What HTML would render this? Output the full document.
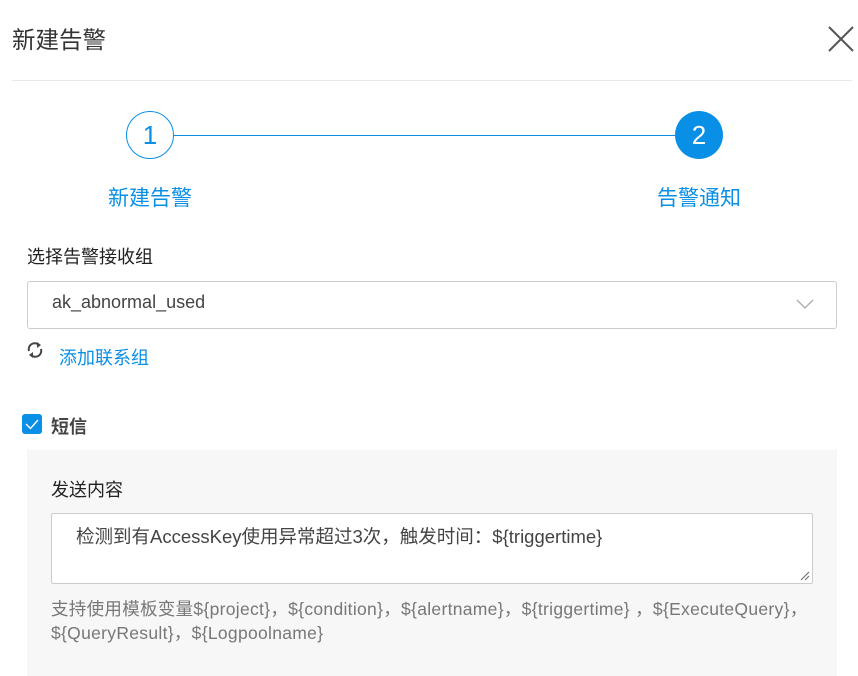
<!DOCTYPE html>
<html><head><meta charset="utf-8"><style>
*{margin:0;padding:0;box-sizing:border-box}
body{width:858px;height:676px;overflow:hidden;background:#fff;font-family:"Liberation Sans","Noto Sans CJK SC",sans-serif;position:relative;color:#333}
.a{position:absolute;white-space:nowrap}
</style></head><body>
<div class="a" style="left:12px;top:21px;font-size:23.5px;color:#333">新建告警</div>
<svg class="a" style="left:826px;top:24px" width="30" height="30"><path d="M3 3L27 27M27 3L3 27" stroke="#555" stroke-width="2"/></svg>
<div class="a" style="left:12px;top:80px;width:840px;height:1px;background:#e8e8e8"></div>
<div class="a" style="left:174px;top:135px;width:502px;height:1px;background:#0a8fe6"></div>
<div class="a" style="left:126px;top:111px;width:48px;height:48px;border:1px solid #0a8fe6;border-radius:50%;color:#0a8fe6;font-size:26px;text-align:center;line-height:46px">1</div>
<div class="a" style="left:675px;top:111px;width:48px;height:48px;background:#0a8fe6;border-radius:50%;color:#fff;font-size:26px;text-align:center;line-height:48px">2</div>
<div class="a" style="left:108px;top:182px;font-size:21px;color:#0a8fe6">新建告警</div>
<div class="a" style="left:657px;top:182px;font-size:21px;color:#0a8fe6">告警通知</div>
<div class="a" style="left:27px;top:243px;font-size:18px;color:#222">选择告警接收组</div>
<div class="a" style="left:27px;top:281px;width:810px;height:48px;border:1px solid #ccc;border-radius:3px"></div>
<div class="a" style="left:52px;top:292px;font-size:18px;color:#444">ak_abnormal_used</div>
<svg class="a" style="left:796px;top:298px" width="18" height="12"><path d="M1 2L9 10L17 2" stroke="#aaa" stroke-width="1.3" fill="none"/></svg>
<svg class="a" style="left:26px;top:341px" width="18" height="18" viewBox="0 0 18 18"><path d="M3 10A6 6 0 0 1 13 4" stroke="#444" stroke-width="2" fill="none"/><path d="M11 1L15 4L11 7Z" fill="#444"/><path d="M15 8A6 6 0 0 1 5 14" stroke="#444" stroke-width="2" fill="none"/><path d="M7 17L3 14L7 11Z" fill="#444"/></svg>
<div class="a" style="left:59px;top:344px;font-size:18px;color:#0a8fe6">添加联系组</div>
<div class="a" style="left:22px;top:414px;width:20px;height:20px;background:#0a8fe6;border-radius:3px"></div>
<svg class="a" style="left:22px;top:414px" width="20" height="20"><path d="M4 10L8.5 14.5L16 6" stroke="#fff" stroke-width="1.4" fill="none"/></svg>
<div class="a" style="left:51px;top:413px;font-size:18px;font-weight:bold;color:#444">短信</div>
<div class="a" style="left:27px;top:450px;width:810px;height:226px;background:#f7f7f7"></div>
<div class="a" style="left:51px;top:476px;font-size:18px;color:#222">发送内容</div>
<div class="a" style="left:51px;top:513px;width:762px;height:71px;background:#fff;border:1px solid #ccc;border-radius:2px"></div>
<div class="a" style="left:76px;top:523px;font-size:18.5px;color:#444;letter-spacing:0">检测到有AccessKey使用异常超过3次，触发时间：${triggertime}</div>
<svg class="a" style="left:799px;top:570px" width="12" height="12"><path d="M2 10L10 2M6 10L10 6" stroke="#666" stroke-width="1"/></svg>
<div class="a" style="left:51px;top:596px;font-size:17.5px;color:#777;letter-spacing:0.3px">支持使用模板变量${project}，${condition}，${alertname}，${triggertime} ，${ExecuteQuery}，</div>
<div class="a" style="left:51px;top:620px;font-size:17.5px;color:#777;letter-spacing:0.3px">${QueryResult}，${Logpoolname}</div>
</body></html>
